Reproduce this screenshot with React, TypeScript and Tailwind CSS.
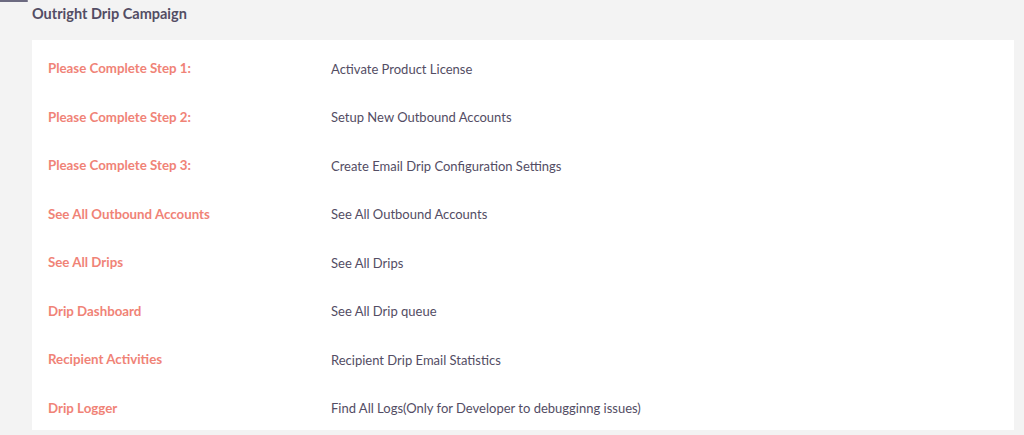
import React from 'react'

const rows = [
  { label: 'Please Complete Step 1:', text: 'Activate Product License' },
  { label: 'Please Complete Step 2:', text: 'Setup New Outbound Accounts' },
  { label: 'Please Complete Step 3:', text: 'Create Email Drip Configuration Settings' },
  { label: 'See All Outbound Accounts', text: 'See All Outbound Accounts' },
  { label: 'See All Drips', text: 'See All Drips' },
  { label: 'Drip Dashboard', text: 'See All Drip queue' },
  { label: 'Recipient Activities', text: 'Recipient Drip Email Statistics' },
  { label: 'Drip Logger', text: 'Find All Logs(Only for Developer to debugginng issues)' },
]

export default function App() {
  return (
    <div
      className="w-[1024px] h-[435px] overflow-hidden bg-[#f3f3f3]"
      style={{ fontFamily: 'Lato, "Open Sans", sans-serif' }}
    >
      <div className="h-[2px] w-[28px] bg-[#6c6a80] rounded-r-sm" />
      <div className="pl-[32px] pr-[10px]">
        <h2 className="h-[38px] pt-[2px] text-[14.5px] font-bold text-[#534d64] leading-[20px]">
          Outright Drip Campaign
        </h2>
        <div className="bg-white px-[16px] pt-[5px] h-[390px] overflow-hidden">
          {rows.map(r => (
            <div key={r.label} className="flex items-center h-[48.5px]">
              <div className="w-[283px] text-[13.3px] font-bold text-[#f08377]">{r.label}</div>
              <div className="text-[13px] text-[#534d64]">{r.text}</div>
            </div>
          ))}
        </div>
      </div>
    </div>
  )
}
